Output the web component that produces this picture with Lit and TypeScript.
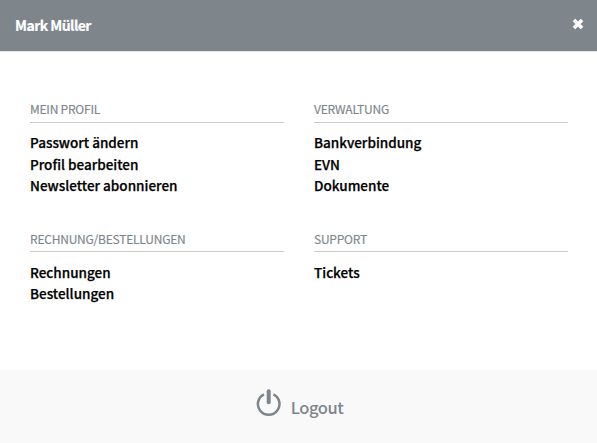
import { LitElement, html, css } from "lit";
import { customElement } from "lit/decorators.js";

interface Section {
  title: string;
  key: string;
  links: string[];
}

const sections: Section[] = [
  { title: "MEIN PROFIL", key: "profile", links: ["Passwort ändern", "Profil bearbeiten", "Newsletter abonnieren"] },
  { title: "VERWALTUNG", key: "admin", links: ["Bankverbindung", "EVN", "Dokumente"] },
  { title: "RECHNUNG/BESTELLUNGEN", key: "billing", links: ["Rechnungen", "Bestellungen"] },
  { title: "SUPPORT", key: "support", links: ["Tickets"] },
];

@customElement("app-root")
export class AppRoot extends LitElement {
  static styles = css`
    :host {
      display: flex;
      flex-direction: column;
      height: 443px;
      box-sizing: border-box;
      background: #fff;
      font-family: "Noto Sans CJK SC", "Noto Sans", sans-serif;
      color: #000;
    }
    header {
      display: flex;
      justify-content: space-between;
      align-items: center;
      height: 51px;
      padding: 0 13px 0 15px;
      background: #7e868c;
      border-bottom: 1px solid #e5e5e5;
      color: #fff;
    }
    .name {
      margin-bottom: 2px;
      font-size: 14px;
      font-weight: 700;
      line-height: 20px;
      letter-spacing: -0.54px;
      -webkit-text-stroke: 0.2px #fff;
    }
    .close {
      display: block;
      width: 12px;
      height: 12px;
      margin-bottom: 3px;
    }
    main {
      flex: 1;
      display: grid;
      grid-template-columns: 254px 254px;
      grid-template-rows: 129px 1fr;
      column-gap: 30px;
      padding: 50px 29px 0 30px;
    }
    h2 {
      margin: 0 0 9.3px;
      height: 20px;
      border-bottom: 1px solid #ccc;
      font-size: 12px;
      font-weight: 400;
      line-height: 14px;
      letter-spacing: -0.22px;
      color: #7e868c;
      -webkit-text-stroke: 0.15px #7e868c;
    }
    .billing h2,
    .support h2 {
      line-height: 16px;
      margin-bottom: 10px;
    }
    ul {
      list-style: none;
      margin: 0;
      padding: 0;
    }
    li {
      font-size: 13.5px;
      font-weight: 500;
      line-height: 21.43px;
      -webkit-text-stroke: 0.25px #000;
    }
    footer {
      display: flex;
      justify-content: center;
      height: 73px;
      background: #f9f9f9;
      color: #7e868c;
    }
    .power {
      width: 26px;
      height: 30px;
      margin: 18px 9px 0 2px;
    }
    .logout {
      margin-top: 25px;
      font-size: 16.5px;
      font-weight: 500;
      line-height: 24px;
      letter-spacing: -0.45px;
    }
  `;

  render() {
    return html`
      <header>
        <span class="name">Mark Müller</span>
        <svg class="close" viewBox="0 0 12 12">
          <path d="M3.2 3.2 8.8 8.8M8.8 3.2 3.2 8.8" stroke="#fff" stroke-width="3.6" stroke-linecap="square" />
        </svg>
      </header>
      <main>
        ${sections.map(
          (s) => html`<section class=${s.key}>
            <h2>${s.title}</h2>
            <ul>${s.links.map((l) => html`<li>${l}</li>`)}</ul>
          </section>`
        )}
      </main>
      <footer>
        <svg class="power" viewBox="0 0 26 30" fill="none" stroke="#7e868c">
          <path d="M8 6.3A10.8 10.8 0 1 0 17.4 6.3" stroke-width="2.5" />
          <path d="M12.7 3.2V14.2" stroke-width="4" stroke-linecap="round" />
        </svg>
        <span class="logout">Logout</span>
      </footer>
    `;
  }
}
